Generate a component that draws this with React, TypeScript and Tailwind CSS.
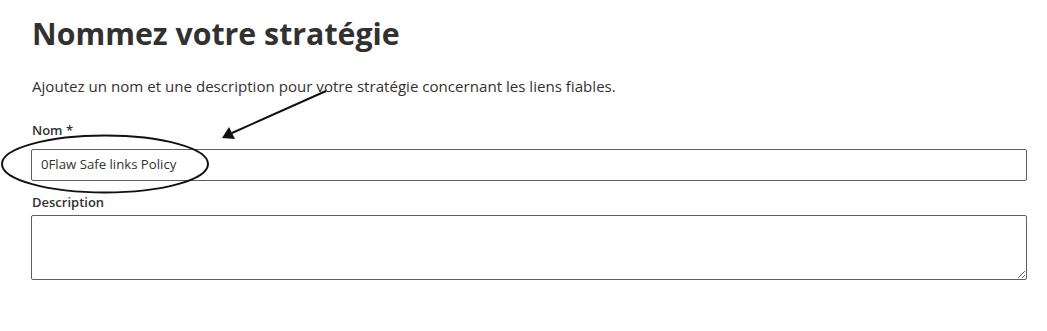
import React from 'react'

export default function App() {
  return (
    <div className="relative w-[1047px] h-[331px] bg-white text-[#323130] font-['Open_Sans',sans-serif] overflow-hidden">
      <div className="pl-[32px] pr-[20px] pt-[12px]">
        <h1 className="text-[30.3px] leading-[44px] font-bold">Nommez votre stratégie</h1>
        <p className="mt-[20px] text-[15.1px] leading-[20px]">
          Ajoutez un nom et une description pour votre stratégie concernant les liens fiables.
        </p>
        <label className="block mt-[24px] text-[13px] font-semibold leading-[20px]">Nom *</label>
        <div className="mt-[9px] -ml-px w-[996px] h-[32px] border border-[#605e5c] rounded-[2px] flex items-center px-[9px]">
          <span className="text-[13.2px]">0Flaw Safe links Policy</span>
        </div>
        <label className="block mt-[11px] text-[13px] font-semibold leading-[20px]">Description</label>
        <textarea className="block mt-[3px] -ml-px w-[996px] h-[65px] border border-[#605e5c] rounded-[2px] resize-y outline-none" />
      </div>

      <svg className="absolute inset-0 pointer-events-none" width="1047" height="331">
        <ellipse cx="105" cy="164" rx="103" ry="28.5" fill="none" stroke="#111" strokeWidth="2" />
        <line x1="326" y1="91" x2="232" y2="133" stroke="#111" strokeWidth="2" />
        <polygon points="222,138 229,127 235,139" fill="#111" />
      </svg>
    </div>
  )
}
